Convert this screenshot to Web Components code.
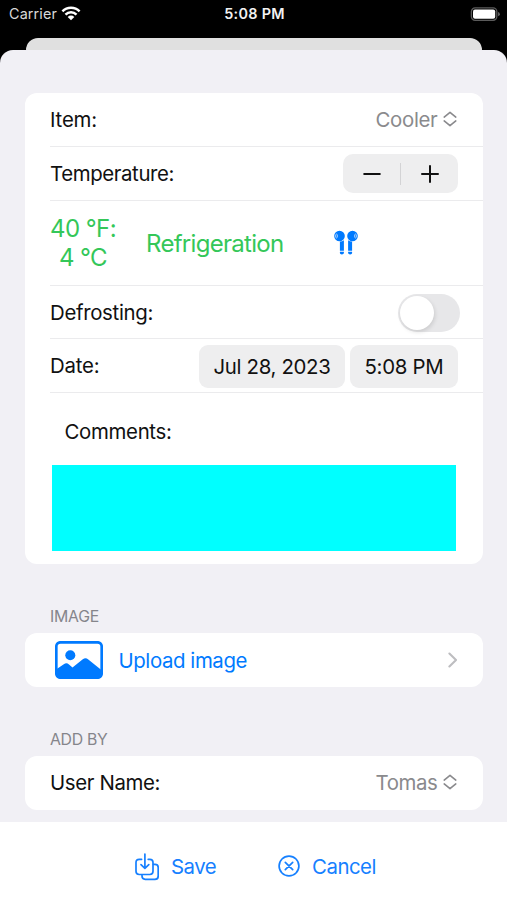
<!DOCTYPE html>
<html lang="en">
<head>
<meta charset="utf-8">
<title>Item form</title>
<style>
  html, body { margin: 0; height: 100%; }
  body { font-family: Inter, "Liberation Sans", sans-serif; background: #000; overflow: hidden; }
</style>
</head>
<body>
<food-form></food-form>
<script>
const define = (name, html, extra) => {
  const t = document.createElement('template');
  t.innerHTML = html;
  customElements.define(name, class extends HTMLElement {
    constructor() {
      super();
      this.attachShadow({ mode: 'open' }).append(t.content.cloneNode(true));
    }
    connectedCallback() { if (extra) extra(this); }
  });
};

/* One-line label; "w" sets the width its tracking is adjusted to. */
define('fit-label', `
  <style>
    :host { display: block; flex: none; white-space: nowrap; font-size: var(--size, 20.4px); line-height: 1.2; padding-top: var(--drop, 0px); }
    span { display: inline-block; }
  </style><span></span>`, el => {
  const s = el.shadowRoot.querySelector('span');
  s.textContent = el.getAttribute('text');
  const w = parseFloat(el.getAttribute('w'));
  s.style.letterSpacing = (w - s.getBoundingClientRect().width) / s.textContent.length + 'px';
});

const icons = {
  wifi: [20, 15, '<g fill="none" stroke="#fff" stroke-width="2.5"><path d="M1.4 5.3A12.2 12.2 0 0 1 18.6 5.3"/><path d="M4.5 8.6A7.8 7.8 0 0 1 15.5 8.6"/></g><path fill="#fff" d="M10 14.2 6.7 10.9A4.7 4.7 0 0 1 13.3 10.9Z"/>'],
  battery: [30, 14, '<rect x="1.4" y=".9" width="25.4" height="12.4" rx="3.7" fill="none" stroke="#5b5b5b" stroke-width="1.3"/><rect x="3" y="2.5" width="22.2" height="9.2" rx="2" fill="#fff"/><path d="M28.1 5v4.3q1.7-.6 1.7-2.15T28.1 5z" fill="#6b6b6b"/>'],
  updown: [14, 16, '<path d="M1.2 6.100 7 1.300l5.800 4.800M1.200 9.900 7 14.700l5.800-4.800" fill="none" stroke="#8a8a8d" stroke-width="1.600" stroke-linecap="round" stroke-linejoin="round"/>'],
  chevron: [10, 16, '<path d="M1.400 1.600 8 8l-6.600 6.400" fill="none" stroke="#bdbdc0" stroke-width="2.100" stroke-linecap="round" stroke-linejoin="round"/>'],
  minus: [18, 18, '<path d="M1.200 9h15.600" stroke="#111" stroke-width="2" stroke-linecap="round"/>'],
  plus: [18, 18, '<path d="M1 9h16M9 1v16" stroke="#111" stroke-width="2" stroke-linecap="round"/>'],
  buds: [26, 26, '<g fill="#007aff"><circle cx="6.500" cy="6" r="5.300"/><path d="M6.900 11.600q2.300-.1 4-1.300v10.400h-4z"/><path d="M6.900 21.700h4v1.400q0 1.300-2 1.300t-2-1.300z"/><circle cx="19.500" cy="6" r="5.300"/><path d="M19.100 11.600q-2.300-.1-4-1.300v10.400h4z"/><path d="M19.100 21.700h-4v1.400q0 1.300 2 1.300t2-1.300z"/></g><g fill="none" stroke="#a9d2ff" stroke-width="1"><ellipse cx="3.500" cy="6" rx=".9" ry="2"/><ellipse cx="22.500" cy="6" rx=".9" ry="2"/></g>'],
  photo: [48, 38, '<rect x="1.300" y="1.300" width="45.400" height="35.400" rx="4.200" fill="none" stroke="#007aff" stroke-width="2.700"/><circle cx="15.300" cy="14.200" r="5" fill="#007aff"/><path fill="#007aff" d="M1 28.500 8.800 23.300q2.700-2 5.200.2l3.500 3L27.800 18.300q2.800-2.100 5.500.2L47 29.500v3.500q0 4.500-4.500 4.500h-37Q1 37.500 1 33z"/>'],
  save: [24, 28, '<g fill="none" stroke="#1680ff" stroke-width="1.700" stroke-linecap="round" stroke-linejoin="round"><path d="M6.600 6.300H4.200Q1 6.300 1 9.500v8.800q0 3.200 3.200 3.200h10.600q3.200 0 3.200-3.200V9.500q0-3.200-3.200-3.200h-1.600"/><path d="M9.900 1v14.200M6 11.700l3.900 3.700 3.900-3.700"/><path d="M7 21.800v1.300q0 3.200 3.200 3.200H20q3.200 0 3.200-3.200v-8.600q0-3.200-3.200-3.200h-1.600"/></g>'],
  cancel: [22, 22, '<g fill="none" stroke="#1680ff" stroke-width="1.700" stroke-linecap="round"><circle cx="11" cy="11" r="9.900"/><path d="m7.300 7.300 7.400 7.400M14.700 7.300l-7.400 7.400"/></g>']
};
define('ui-icon', `<style>:host { display: block; flex: none; line-height: 0; } svg { display: block; }</style>`, el => {
  const [w, h, body] = icons[el.getAttribute('name')];
  el.shadowRoot.innerHTML += `<svg width="${w}" height="${h}" viewBox="0 0 ${w} ${h}" aria-hidden="true">${body}</svg>`;
});

define('status-bar', `
  <style>
    :host { display: grid; grid-template-columns: 1fr auto 1fr; align-items: center; height: 28px; padding: 0 7px 0 9px; box-sizing: border-box; color: #fff; --size: 14.4px; }
    .l { display: flex; gap: 5px; align-items: center; color: #d8d8d8; }
    .l ui-icon { margin: -2px 0 0 -1px; }
    .m { font-weight: 600; color: #f2f2f2; }
    .r { justify-self: end; margin-top: -1px; }
  </style>
  <div class="l"><fit-label text="Carrier" w="48"></fit-label><ui-icon name="wifi"></ui-icon></div>
  <fit-label class="m" text="5:08 PM" w="60.5"></fit-label>
  <ui-icon class="r" name="battery"></ui-icon>`);

define('form-card', `
  <style>:host { display: block; margin: 0 24.5px 0 25px; background: #fff; border-radius: 12px; overflow: hidden; }</style>
  <slot></slot>`);

define('form-row', `
  <style>
    :host { display: block; padding-left: 25px; --drop: 2px; }
    div { display: flex; align-items: center; height: var(--h, 54px); box-sizing: border-box; padding-right: 24.5px; border-bottom: 1px solid var(--line, #ebebed); }
  </style>
  <div><slot></slot></div>`);

define('value-picker', `
  <style>:host { margin: 0 1.5px 0 auto; color: #8a8a8d; display: flex; align-items: center; gap: 5px; }</style>
  <slot></slot><ui-icon name="updown"></ui-icon>`);

define('ui-stepper', `
  <style>
    :host { margin-left: auto; display: grid; grid-template-columns: 1fr 1px 1fr; align-items: center; justify-items: center; width: 115px; height: 39px; border-radius: 10px; background: #eeeeef; }
    i { width: 1px; height: 22px; background: #d3d3d5; }
  </style>
  <ui-icon name="minus"></ui-icon><i></i><ui-icon name="plus"></ui-icon>`);

define('ui-switch', `
  <style>
    :host { display: flex; align-items: center; margin: 1px -2px 0 auto; width: 62px; height: 38px; border-radius: 19px; background: #e7e7e9; box-sizing: border-box; padding: 2px; }
    i { width: 34px; height: 34px; border-radius: 50%; background: #fff; box-shadow: 1px 2px 4px rgba(0,0,0,.12); }
  </style><i></i>`);

define('date-chip', `
  <style>:host { display: flex; flex: none; align-items: center; justify-content: center; height: 43px; border-radius: 9px; background: #eeeeef; color: #111; }</style>
  <slot></slot>`);

define('section-title', `
  <style>:host { display: flex; align-items: center; height: 20px; margin-left: 50px; color: #85858b; --size: 15.8px; }</style>
  <slot></slot>`);

define('action-button', `
  <style>:host { display: flex; align-items: center; color: #1680ff; gap: 12px; --drop: 1px; }</style>
  <slot></slot>`);

define('food-form', `
  <style>
    :host { display: flex; flex-direction: column; height: 900px; width: 507px; background: #000; color: #111; }
    .back { flex: none; margin: 10px 25px 0 26px; height: 12px; background: #e0e0e0; border-radius: 12px 12px 0 0; }
    .sheet { flex: none; height: 772px; box-sizing: border-box; background: #f1f0f5; border-radius: 13px 13px 0 0; padding-top: 43px; }
    .temp { color: #34c759; --size: 24px; --drop: 0px; display: flex; align-items: center; flex: 1; padding-top: 1px; }
    .deg { display: flex; flex-direction: column; align-items: center; width: 66px; }
    .temp > fit-label { margin-left: 30px; padding-top: 1px; }
    .temp ui-icon { margin: -1px 0 0 49px; }
    .chips { display: flex; gap: 5px; margin-left: auto; padding-top: 2px; }
    .comments { height: 171px; box-sizing: border-box; padding: 27px 26.5px 0 27px; }
    .comments fit-label { margin-left: 12.5px; }
    .area { height: 86px; margin-top: 21px; background: #0ff; }
    .upload { display: flex; align-items: center; height: 54px; padding: 0 24.5px 0 29.5px; color: #007aff; box-sizing: border-box; --drop: 2px; }
    .upload fit-label { margin-left: 16px; }
    .upload .chev { margin-left: auto; }
    .foot { flex: 1; background: #fff; display: flex; align-items: center; padding: 11px 0 0 135px; gap: 62px; }
  </style>
  <status-bar></status-bar>
  <div class="back"></div>
  <div class="sheet">
    <form-card>
      <form-row><fit-label text="Item:" w="47"></fit-label><value-picker><fit-label text="Cooler" w="62"></fit-label></value-picker></form-row>
      <form-row><fit-label text="Temperature:" w="124"></fit-label><ui-stepper></ui-stepper></form-row>
      <form-row style="--h:85px"><div class="temp"><div class="deg"><fit-label text="40 °F:" w="66"></fit-label><fit-label text="4 °C" w="48"></fit-label></div><fit-label text="Refrigeration" w="137.5"></fit-label><ui-icon name="buds"></ui-icon></div></form-row>
      <form-row style="--h:53px"><fit-label text="Defrosting:" w="103"></fit-label><ui-switch></ui-switch></form-row>
      <form-row><fit-label text="Date:" w="49.5"></fit-label><div class="chips"><date-chip style="width:146px"><fit-label text="Jul 28, 2023" w="117"></fit-label></date-chip><date-chip style="width:108px"><fit-label text="5:08 PM" w="79"></fit-label></date-chip></div></form-row>
      <div class="comments"><fit-label text="Comments:" w="107"></fit-label><div class="area"></div></div>
    </form-card>
    <section-title style="margin-top:43px"><fit-label text="IMAGE" w="49"></fit-label></section-title>
    <form-card style="margin-top:6px"><div class="upload"><ui-icon name="photo"></ui-icon><fit-label text="Upload image" w="128.5"></fit-label><ui-icon class="chev" name="chevron"></ui-icon></div></form-card>
    <section-title style="margin-top:43px"><fit-label text="ADD BY" w="57.5"></fit-label></section-title>
    <form-card style="margin-top:6px"><form-row style="--line:transparent"><fit-label text="User Name:" w="110"></fit-label><value-picker><fit-label text="Tomas" w="62"></fit-label></value-picker></form-row></form-card>
  </div>
  <div class="foot">
    <action-button><ui-icon name="save"></ui-icon><fit-label text="Save" w="45"></fit-label></action-button>
    <action-button><ui-icon name="cancel"></ui-icon><fit-label text="Cancel" w="64"></fit-label></action-button>
  </div>`);
</script>
</body>
</html>
